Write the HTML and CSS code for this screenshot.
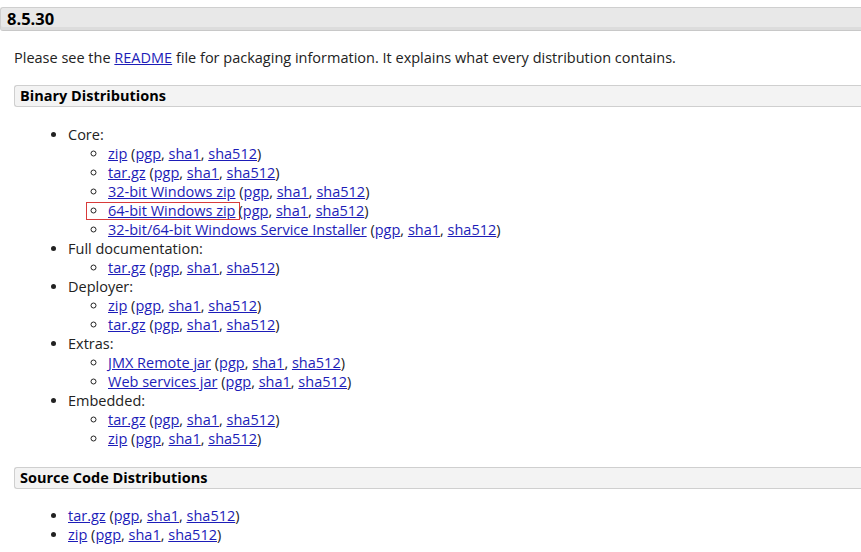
FILE: index.html
```html
<!DOCTYPE html>
<html>
<head>
<meta charset="utf-8">
<link rel="stylesheet" href="styles.css">
</head>
<body>
<div class="page">
  <h3 class="version">8.5.30</h3>
  <p class="intro">Please see the <a href="#">README</a> file for packaging information. It explains what every distribution contains.</p>
  <h4 class="section">Binary Distributions</h4>
  <ul class="dist">
    <li>Core:
      <ul class="sub">
        <li><a href="#">zip</a> (<a href="#">pgp</a>, <a href="#">sha1</a>, <a href="#">sha512</a>)</li>
        <li><a href="#">tar.gz</a> (<a href="#">pgp</a>, <a href="#">sha1</a>, <a href="#">sha512</a>)</li>
        <li><a href="#">32-bit Windows zip</a> (<a href="#">pgp</a>, <a href="#">sha1</a>, <a href="#">sha512</a>)</li>
        <li><span class="mark"><a href="#">64-bit Windows zip</a></span>(<a href="#">pgp</a>, <a href="#">sha1</a>, <a href="#">sha512</a>)</li>
        <li><a href="#">32-bit/64-bit Windows Service Installer</a> (<a href="#">pgp</a>, <a href="#">sha1</a>, <a href="#">sha512</a>)</li>
      </ul>
    </li>
    <li>Full documentation:
      <ul class="sub">
        <li><a href="#">tar.gz</a> (<a href="#">pgp</a>, <a href="#">sha1</a>, <a href="#">sha512</a>)</li>
      </ul>
    </li>
    <li>Deployer:
      <ul class="sub">
        <li><a href="#">zip</a> (<a href="#">pgp</a>, <a href="#">sha1</a>, <a href="#">sha512</a>)</li>
        <li><a href="#">tar.gz</a> (<a href="#">pgp</a>, <a href="#">sha1</a>, <a href="#">sha512</a>)</li>
      </ul>
    </li>
    <li>Extras:
      <ul class="sub">
        <li><a href="#">JMX Remote jar</a> (<a href="#">pgp</a>, <a href="#">sha1</a>, <a href="#">sha512</a>)</li>
        <li><a href="#">Web services jar</a> (<a href="#">pgp</a>, <a href="#">sha1</a>, <a href="#">sha512</a>)</li>
      </ul>
    </li>
    <li>Embedded:
      <ul class="sub">
        <li><a href="#">tar.gz</a> (<a href="#">pgp</a>, <a href="#">sha1</a>, <a href="#">sha512</a>)</li>
        <li><a href="#">zip</a> (<a href="#">pgp</a>, <a href="#">sha1</a>, <a href="#">sha512</a>)</li>
      </ul>
    </li>
  </ul>
  <h4 class="section">Source Code Distributions</h4>
  <ul class="dist dist-source">
    <li><a href="#">tar.gz</a> (<a href="#">pgp</a>, <a href="#">sha1</a>, <a href="#">sha512</a>)</li>
    <li><a href="#">zip</a> (<a href="#">pgp</a>, <a href="#">sha1</a>, <a href="#">sha512</a>)</li>
  </ul>
</div>
</body>
</html>
```

FILE: styles.css
```css
html, body {
  margin: 0;
  padding: 0;
  background: #fff;
}
body {
  font-family: "Open Sans", "Liberation Sans", sans-serif;
  font-size: 14.5px;
  color: #222;
}
.page {
  padding-top: 7px;
}
.version {
  margin: 0;
  height: 22px;
  line-height: 22px;
  padding-left: 6px;
  font-size: 16.5px;
  font-weight: bold;
  color: #000;
  background: #e8e8e8;
  border: 1px solid #cfcfcf;
  border-right: none;
  border-bottom-color: #c8c8c8;
  border-radius: 3px 0 0 3px;
  box-shadow: inset 0 -3px 0 #dcdcdc;
}
.intro {
  margin: 17px 0 0 14px;
  line-height: 19px;
}
a {
  color: #1d1db8;
  text-decoration: underline;
}
.section {
  margin: 18px 0 0 14px;
  height: 20px;
  line-height: 20px;
  padding-left: 5px;
  font-size: 14.5px;
  font-weight: bold;
  color: #000;
  background: #f3f3f3;
  border: 1px solid #cfcfcf;
  border-right: none;
  border-radius: 3px 0 0 3px;
}
.dist {
  margin: 18px 0 0 0;
  padding-left: 68px;
  line-height: 19px;
  list-style: disc;
}
.dist-source {
  margin-top: 17px;
}
.dist + .section {
  margin-top: 19px;
}
.sub {
  margin: 0;
  padding-left: 40px;
  list-style: circle;
}
.mark {
  outline: 1px solid #d83b3b;
  padding-left: 21px;
  margin-left: -21px;
  padding-right: 3px;
  display: inline-block;
  line-height: 16px;
}
```
